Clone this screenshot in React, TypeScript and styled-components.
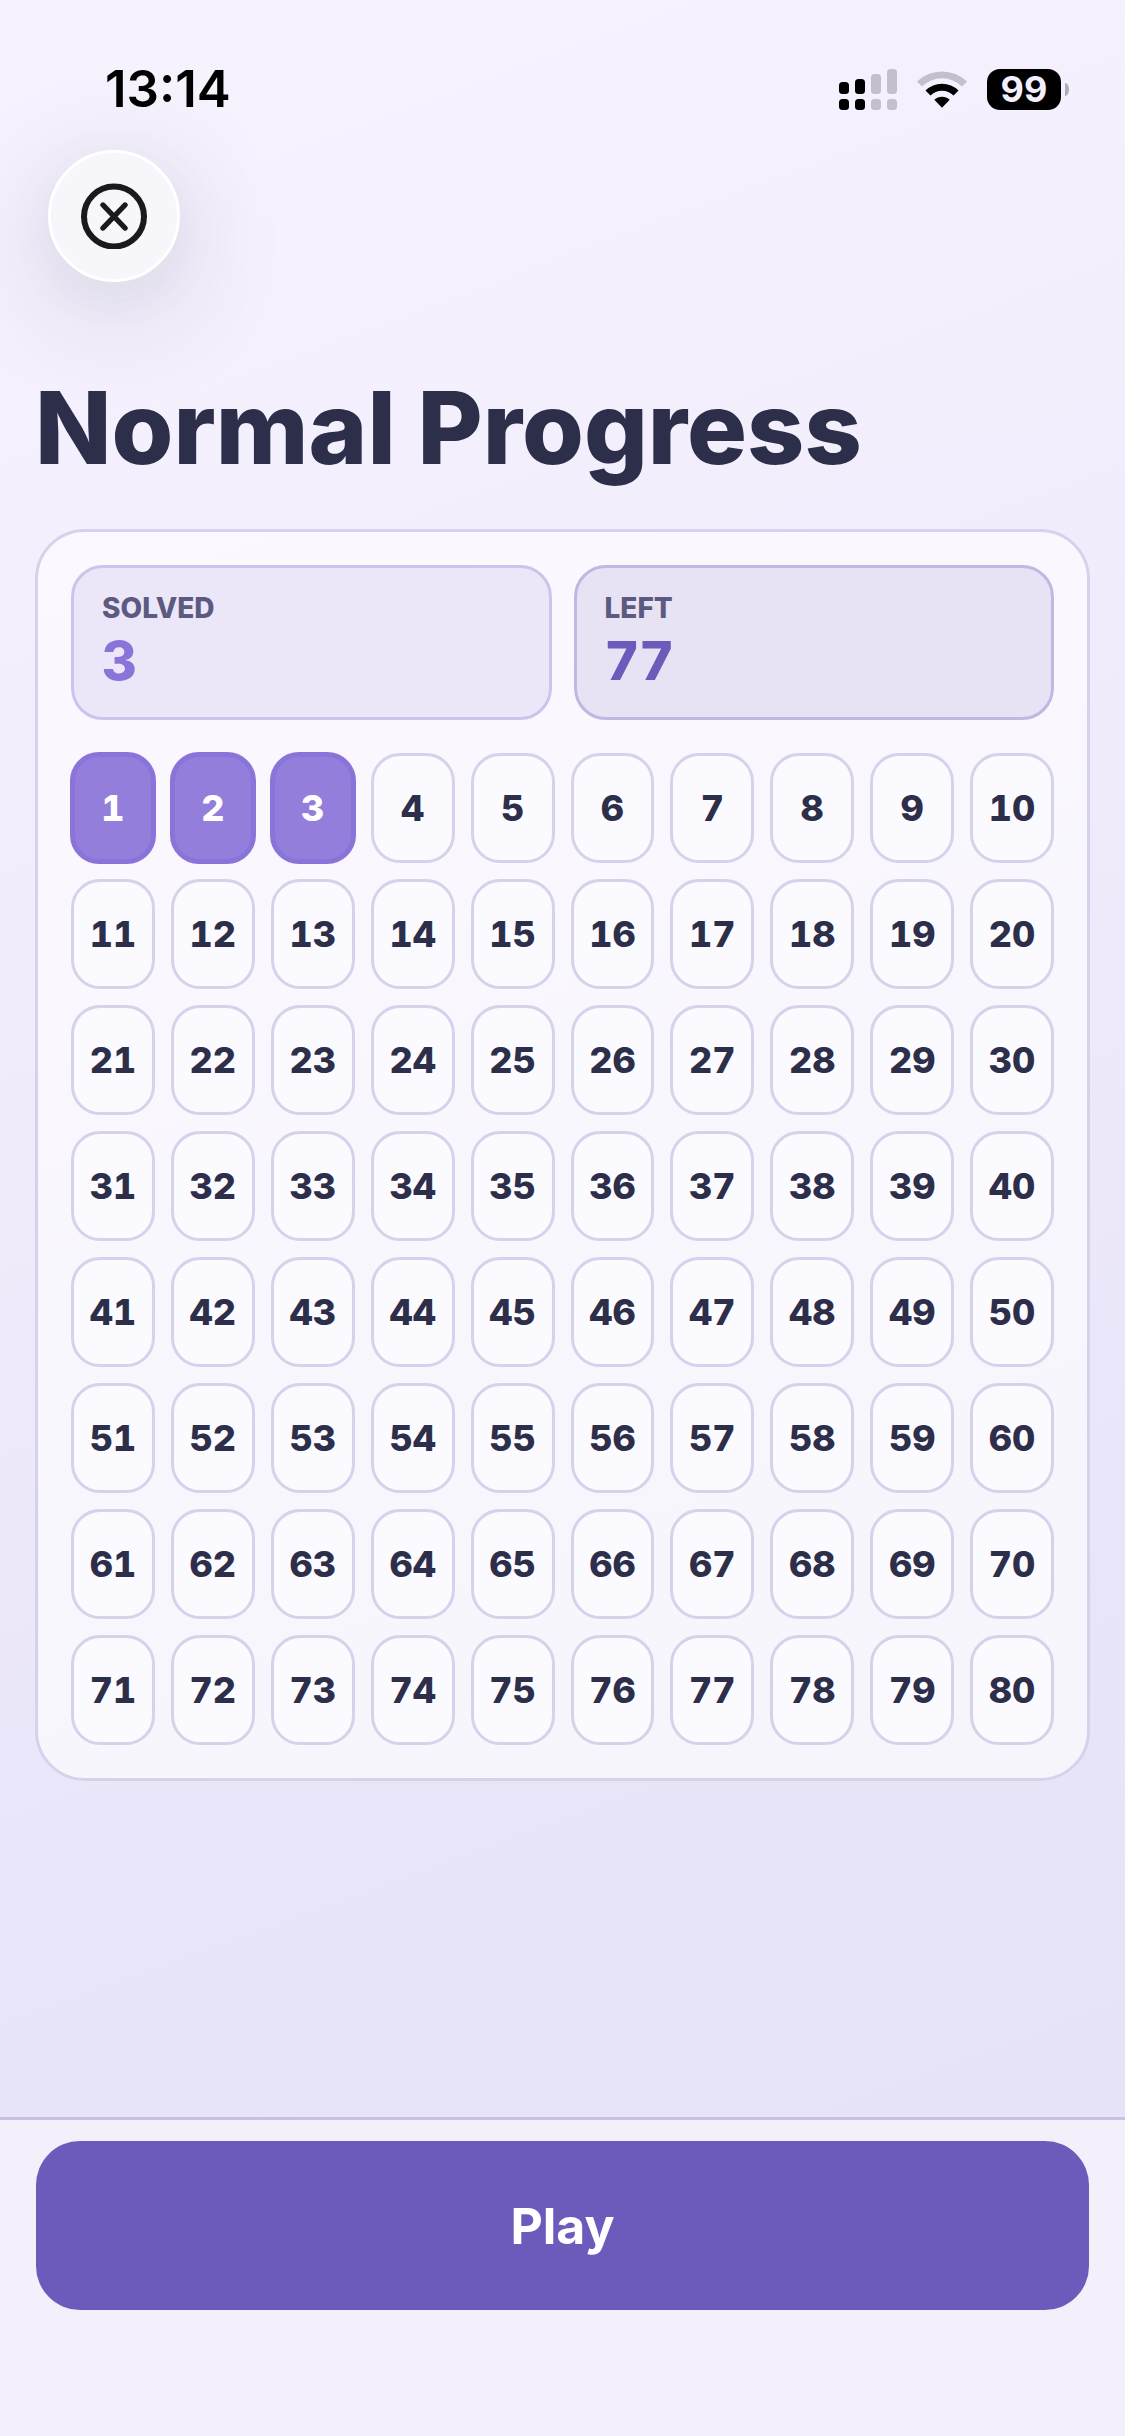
import React from "react";
import styled, { createGlobalStyle } from "styled-components";

const TOTAL = 80;
const SOLVED = 3;

const GlobalStyle = createGlobalStyle`
  *, *::before, *::after { box-sizing: border-box; }
  body {
    margin: 0;
    font-family: Inter, "Liberation Sans", sans-serif;
    color: #2d2e4a;
  }
  button { font-family: inherit; cursor: pointer; }
`;

const Screen = styled.div`
  min-height: 100vh;
  display: flex;
  flex-direction: column;
  background: linear-gradient(160deg, #f7f3fe 0%, #efebfb 42%, #e9e5f9 70%, #e5e1f6 100%);
`;

const StatusBar = styled.header`
  display: flex;
  align-items: center;
  justify-content: space-between;
  height: 150px;
  padding: 28px 56px 0 105px;
  color: #000;
`;

const Clock = styled.time`
  font-size: 51px;
  font-weight: 600;
  line-height: 60px;
`;

const StatusIcons = styled.div`
  display: flex;
  align-items: center;
  gap: 20px;
`;

const Battery = styled.div`
  display: flex;
  align-items: center;
  gap: 4px;
`;

const BatteryBody = styled.span`
  width: 74px;
  height: 41px;
  border-radius: 13px;
  background: #000;
  color: #f3effc;
  font-size: 36px;
  font-weight: 700;
  line-height: 41px;
  text-align: center;
`;

const BatteryTip = styled.span`
  width: 4px;
  height: 13px;
  border-radius: 0 4px 4px 0 / 0 7px 7px 0;
  background: #aeabb6;
`;

const Main = styled.main`
  flex: 1;
  display: flex;
  flex-direction: column;
  align-items: stretch;
  padding: 0 35px 48px;
`;

const CloseButton = styled.button`
  display: grid;
  place-items: center;
  width: 132px;
  height: 132px;
  margin-left: 13px;
  padding: 0;
  border: 3px solid #fff;
  border-radius: 50%;
  background: #f7f6fb;
  box-shadow: 0 24px 120px rgba(45, 35, 70, 0.16), 0 12px 60px rgba(45, 35, 70, 0.04);
`;

const Title = styled.h1`
  margin: 84px 0 39px;
  font-size: 100px;
  font-weight: 800;
  line-height: 124px;
`;

const Card = styled.section`
  display: flex;
  flex-direction: column;
  gap: 33px;
  padding: 33px;
  border: 3px solid #d7d1eb;
  border-radius: 50px;
  background: linear-gradient(160deg, #fbf9ff, #f7f5fc);
`;

const Stats = styled.dl`
  display: grid;
  grid-template-columns: 1fr 1fr;
  gap: 22px;
  margin: 0;
`;

const Stat = styled.div<{ $fill: string; $edge: string }>`
  height: 155px;
  padding: 24px 28px;
  border: 3px solid ${(p) => p.$edge};
  border-radius: 32px;
  background: ${(p) => p.$fill};
`;

const StatLabel = styled.dt`
  color: #5c5a80;
  font-size: 28px;
  font-weight: 800;
  line-height: 32px;
`;

const StatValue = styled.dd<{ $color: string }>`
  margin: 5px 0 0;
  color: ${(p) => p.$color};
  font-size: 54px;
  font-weight: 800;
  line-height: 64px;
  font-variant-numeric: tabular-nums;
`;

const Levels = styled.div`
  display: grid;
  grid-template-columns: repeat(10, 1fr);
  grid-auto-rows: 110px;
  gap: 16px;
`;

const Level = styled.button<{ $solved: boolean }>`
  margin: ${(p) => (p.$solved ? "-1px" : "0")};
  padding: 0;
  border: ${(p) => (p.$solved ? "5px solid #8b74d9" : "3px solid #d7d1eb")};
  border-radius: 29px;
  background: ${(p) => (p.$solved ? "#937edb" : "#fbfaff")};
  color: ${(p) => (p.$solved ? "#fff" : "#2d2e4a")};
  font-size: 36px;
  font-weight: 800;
  font-variant-numeric: tabular-nums;
`;

const Footer = styled.footer`
  padding: 21px 36px 126px;
  border-top: 3px solid #c8c1e2;
  background: #f3effb;
`;

const PlayButton = styled.button`
  display: block;
  width: 100%;
  height: 169px;
  border: 0;
  border-radius: 44px;
  background: #6e5aba;
  color: #fff;
  font-size: 50px;
  font-weight: 700;
`;

const SIGNAL_BARS = [
  { top: 13, on: true },
  { top: 10, on: true },
  { top: 5, on: false },
  { top: 0, on: false },
];

function SignalIcon() {
  return (
    <svg width="58" height="41" viewBox="0 0 58 41" aria-hidden="true">
      {SIGNAL_BARS.map((bar, i) => (
        <g key={i} fill={bar.on ? "#000" : "#c3bfcc"}>
          <rect x={i * 16} y={bar.top} width="10" height={25 - bar.top} rx="3.5" />
          <rect x={i * 16} y="30" width="10" height="11" rx="3.5" />
        </g>
      ))}
    </svg>
  );
}

function WifiIcon() {
  return (
    <svg width="50" height="41" viewBox="0 0 50 41" aria-hidden="true">
      <path d="M0 12.500A36 36 0 0 1 50 12.500L45 17.500A28.500 28.500 0 0 0 5 17.500Z" fill="#c3bfcc" />
      <path d="M8.500 21.500A23.500 23.500 0 0 1 41.500 21.500L36.500 26.500A16.500 16.500 0 0 0 13.500 26.500Z" />
      <path d="M17.300 30.800A11 11 0 0 1 32.700 30.800L25 38.800Z" />
    </svg>
  );
}

function CloseIcon() {
  return (
    <svg width="66" height="66" viewBox="0 0 66 66" fill="none" stroke="#1b191e" strokeLinecap="round" aria-hidden="true">
      <circle cx="33" cy="33.500" r="30" strokeWidth="6" />
      <path d="M22 22L44 45M44 22L22 45" strokeWidth="5.400" />
    </svg>
  );
}

export default function App() {
  const levels = Array.from({ length: TOTAL }, (_, i) => i + 1);
  return (
    <>
      <GlobalStyle />
      <Screen>
        <StatusBar>
          <Clock>13:14</Clock>
          <StatusIcons>
            <SignalIcon />
            <WifiIcon />
            <Battery>
              <BatteryBody>99</BatteryBody>
              <BatteryTip />
            </Battery>
          </StatusIcons>
        </StatusBar>
        <Main>
          <CloseButton type="button" aria-label="Close">
            <CloseIcon />
          </CloseButton>
          <Title>Normal Progress</Title>
          <Card>
            <Stats>
              <Stat $fill="#ebe7f8" $edge="#cdc4ee">
                <StatLabel>SOLVED</StatLabel>
                <StatValue $color="#8b74d9">{SOLVED}</StatValue>
              </Stat>
              <Stat $fill="#e7e3f5" $edge="#c1b7e2">
                <StatLabel>LEFT</StatLabel>
                <StatValue $color="#6e5aba">{TOTAL - SOLVED}</StatValue>
              </Stat>
            </Stats>
            <Levels>
              {levels.map((n) => (
                <Level key={n} type="button" $solved={n <= SOLVED}>
                  {n}
                </Level>
              ))}
            </Levels>
          </Card>
        </Main>
        <Footer>
          <PlayButton type="button">Play</PlayButton>
        </Footer>
      </Screen>
    </>
  );
}
